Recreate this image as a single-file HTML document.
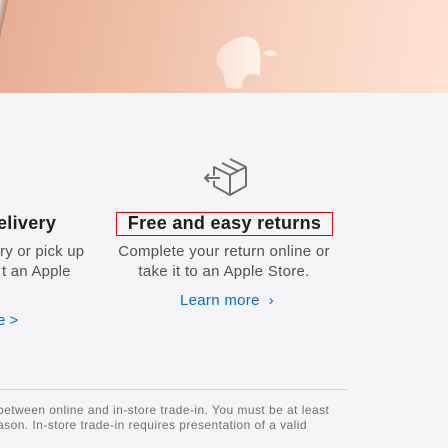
<!DOCTYPE html>
<html><head><style>
body{margin:0;width:448px;height:448px;overflow:hidden;background:#f5f5f7;font-family:"Liberation Sans",sans-serif;position:relative}
.hero{position:absolute;left:0;top:0;width:448px;height:93px;background-color:#f5cdb8;background-image:linear-gradient(100deg,#e6ae94 0%,#f0c1a9 35%,#f8d4c1 65%,#fde3d5 100%);overflow:hidden}
.corner{position:absolute;left:-30px;top:0;width:38px;height:140px;background:linear-gradient(90deg,#fff 0,#f4f4f4 70%,#b88670 100%);transform:skewX(-12deg);transform-origin:top left}
.t{position:absolute;white-space:nowrap}
</style></head><body>
<div class="hero"><div class="corner"></div>
<svg style="position:absolute;left:215px;top:36px" width="66" height="58" viewBox="0 0 66 58">
<defs><linearGradient id="g" x1="0" x2="1"><stop offset="0" stop-color="#fbe0d3"/><stop offset="1" stop-color="#fff4ee"/></linearGradient></defs>
<path d="M26 1 C33 -1 40 2 43 8 C46 14 45 24 45 40 C38 36 30 38 28 44 L27 52 C22 53 16 53 11 51 C9 44 10 40 6 34 C2 30 1 26 2 22 C3 12 14 4 26 1Z" fill="url(#g)"/>
<path d="M48 17 C52 13 58 14 62 18 C58 21 52 21 48 17Z" fill="#fff3ec"/>
</svg></div>
<svg style="position:absolute;left:200px;top:155px" width="50" height="44" viewBox="200 155 50 44" fill="none" stroke="#6e6e73" stroke-width="2" stroke-linejoin="round">
<path d="M230 159 L246 167 L246 186 L230 195 L214 186 L214 181 M214 175 L214 167 Z"/>
<path d="M214 167 L230 175 L246 167 M230 175 L230 195 M222 163 L238 171"/>
<path d="M205 178 L220 178 M209 174 L205 178 L209 182"/>
</svg>
<div class="t" style="left:-3px;top:213px;font-size:18px;font-weight:bold;color:#1d1d1f;letter-spacing:0.3px">elivery</div>
<div class="t" style="left:0px;top:242px;font-size:15px;color:#515154;line-height:20px;letter-spacing:0.2px">ry or pick up</div>
<div class="t" style="left:2px;top:262px;font-size:15px;color:#515154;line-height:20px;letter-spacing:0.2px">t an Apple</div>
<div class="t" style="left:-3px;top:312px;font-size:15px;color:#0070c9">e &gt;</div>
<div style="position:absolute;left:116px;top:212px;width:215px;height:22px;border:1px solid #e00"></div>
<div class="t" style="left:116px;width:217px;text-align:center;top:213px;font-size:18px;font-weight:bold;color:#1d1d1f;letter-spacing:0.3px">Free and easy returns</div>
<div class="t" style="left:90px;width:268px;text-align:center;top:242px;font-size:15px;color:#515154;line-height:20px;letter-spacing:0.3px">Complete your return online or<br>take it to an Apple Store.</div>
<div class="t" style="left:180px;top:292px;font-size:15px;color:#0070c9;letter-spacing:0.3px">Learn more &nbsp;›</div>
<div style="position:absolute;left:0;top:389px;width:347px;height:1px;background:#d2d2d7"></div>
<div class="t" style="left:-3px;top:403px;font-size:12px;color:#6e6e73;line-height:15px;letter-spacing:0.45px">between online and in-store trade-in. You must be at least<br>ason. In-store trade-in requires presentation of a valid</div>
</body></html>
